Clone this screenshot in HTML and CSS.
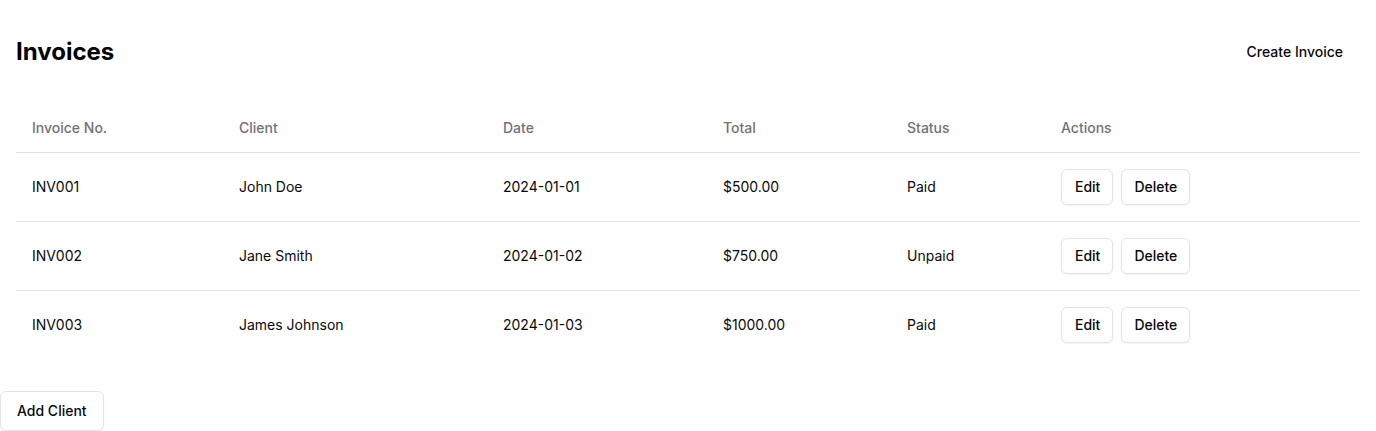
FILE: index.html
```html
<!DOCTYPE html>
<html lang="en">
<head>
<meta charset="utf-8">
<title>Invoices</title>
<link rel="stylesheet" href="styles.css">
</head>
<body>
<div class="page">
  <div class="header">
    <h1 class="title">Invoices</h1>
    <button class="btn btn-ghost">Create Invoice</button>
  </div>
  <table class="table">
    <colgroup>
      <col class="c1"><col class="c2"><col class="c3"><col class="c4"><col class="c5"><col class="c6">
    </colgroup>
    <thead>
      <tr>
        <th>Invoice No.</th><th>Client</th><th>Date</th><th>Total</th><th>Status</th><th>Actions</th>
      </tr>
    </thead>
    <tbody>
      <tr>
        <td>INV001</td><td>John Doe</td><td>2024-01-01</td><td>$500.00</td><td>Paid</td>
        <td><div class="actions"><button class="btn btn-outline btn-sm btn-edit">Edit</button><button class="btn btn-outline btn-sm">Delete</button></div></td>
      </tr>
      <tr>
        <td>INV002</td><td>Jane Smith</td><td>2024-01-02</td><td>$750.00</td><td>Unpaid</td>
        <td><div class="actions"><button class="btn btn-outline btn-sm btn-edit">Edit</button><button class="btn btn-outline btn-sm">Delete</button></div></td>
      </tr>
      <tr>
        <td>INV003</td><td>James Johnson</td><td>2024-01-03</td><td>$1000.00</td><td>Paid</td>
        <td><div class="actions"><button class="btn btn-outline btn-sm btn-edit">Edit</button><button class="btn btn-outline btn-sm">Delete</button></div></td>
      </tr>
    </tbody>
  </table>
</div>
<button class="btn btn-outline add-client">Add Client</button>
</body>
</html>
```
FILE: styles.css
```css
* { box-sizing: border-box; }
html, body { margin: 0; padding: 0; background: #ffffff; }
body {
  font-family: Inter, "Noto Sans", sans-serif;
  color: #09090b;
  font-size: 14px;
}
.page {
  padding: 32px 16px 0 16px;
}
.header {
  display: flex;
  justify-content: space-between;
  align-items: center;
  height: 40px;
  margin-bottom: 32px;
}
.title {
  margin: 0;
  font-size: 24px;
  line-height: 32px;
  font-weight: 700;
  color: #000;
}
.btn {
  font-family: inherit;
  font-size: 14px;
  font-weight: 500;
  line-height: 20px;
  color: #09090b;
  background: #fff;
  border: 1px solid transparent;
  border-radius: 6px;
  height: 40px;
  padding: 0 16px;
  cursor: pointer;
  display: inline-flex;
  align-items: center;
  justify-content: center;
}
.btn-ghost { border-color: transparent; }
.btn-outline {
  border-color: #e4e4e7;
  box-shadow: 0 1px 2px rgba(0, 0, 0, 0.05);
}
.btn-sm { height: 36px; padding: 0 12px; }
.btn-edit { padding: 0 12px 0 13px; }
.table {
  width: 100%;
  border-collapse: collapse;
  font-size: 14px;
}
.c1 { width: 207px; }
.c2 { width: 264px; }
.c3 { width: 220px; }
.c4 { width: 184px; }
.c5 { width: 154px; }
.table th {
  height: 48px;
  padding: 0 16px;
  text-align: left;
  font-weight: 500;
  color: #71717a;
  border-bottom: 1px solid #e4e4e7;
}
.table td {
  padding: 16px;
  line-height: 20px;
  vertical-align: middle;
  border-bottom: 1px solid #e4e4e7;
}
.table tbody tr:last-child td { border-bottom: 0; }
.actions {
  display: flex;
  gap: 8px;
}
.add-client {
  margin-top: 32px;
}
```
